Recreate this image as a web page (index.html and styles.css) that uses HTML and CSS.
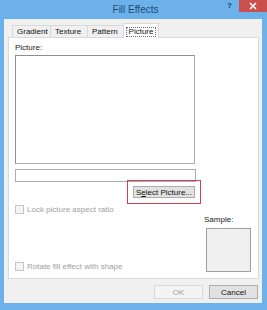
FILE: index.html
```html
<!DOCTYPE html>
<html lang="en">
<head>
    <meta charset="UTF-8">
    <title>Fill Effects</title>
    <link rel="stylesheet" href="styles.css">
</head>
<body>
    <div class="window">
        <div class="titlebar">
            <span></span>
            <span class="title">Fill Effects</span>
            <div class="controls">
                <span class="help">?</span>
                <span class="close">
                    <svg width="8" height="8" viewBox="0 0 8 8"><path d="M1 1L7 7M7 1L1 7" stroke="#fff" stroke-width="1.6"/></svg>
                </span>
            </div>
        </div>

        <div class="body">
            <div class="tabs">
                <div class="tab">Gradient</div>
                <div class="tab">Texture</div>
                <div class="tab">Pattern</div>
                <div class="tab active"><span class="focus">Picture</span></div>
            </div>

            <div class="panel">
                <div class="label">Picture:</div>
                <div class="picture-box"></div>
                <div class="path-box"></div>
                <div class="select-row">
                    <button class="btn select-btn"><span>S<u>e</u>lect Picture...</span></button>
                </div>
                <label class="check disabled">
                    <span class="box"></span>Lock picture aspect ratio
                </label>
                <div class="lower">
                    <label class="check disabled rotate">
                        <span class="box"></span>Rotate fill effect with shape
                    </label>
                    <div class="sample">
                        <div class="label">Sample:</div>
                        <div class="sample-box"></div>
                    </div>
                </div>
            </div>

            <div class="actions">
                <button class="btn disabled">OK</button>
                <button class="btn">Cancel</button>
            </div>
        </div>
    </div>
</body>
</html>
```

FILE: styles.css
```css
body {
    margin: 0;
    font-family: "Liberation Sans", Arial, sans-serif;
    font-size: 8px;
    color: #1a1a1a;
}
.window {
    width: 267px;
    height: 310px;
    box-sizing: border-box;
    background: #6cb1ea;
    padding: 0 5px 7px 4px;
    display: flex;
    flex-direction: column;
}
.titlebar {
    height: 19px;
    display: grid;
    grid-template-columns: 1fr auto 1fr;
    margin-right: -5px;
}
.title {
    font-size: 10px;
    color: #1e4b74;
    line-height: 19px;
}
.controls {
    display: flex;
    justify-content: flex-end;
    align-items: flex-start;
}
.help {
    font-weight: bold;
    font-size: 8px;
    color: #1e3d5c;
    line-height: 11px;
    margin-right: 7px;
}
.close {
    width: 28px;
    height: 12px;
    background: #c9504d;
    display: flex;
    align-items: center;
    justify-content: center;
}
.close svg { display: block; }

.body {
    flex: 1;
    background: #f0f0f0;
    display: flex;
    flex-direction: column;
}
.tabs {
    display: flex;
    align-items: flex-end;
    padding-left: 8px;
    margin-top: 4px;
    height: 15px;
    margin-bottom: -1px;
    position: relative;
    z-index: 1;
}
.tab {
    height: 12px;
    box-sizing: border-box;
    border: 1px solid #d9d9d9;
    border-bottom: none;
    background: #f0f0f0;
    margin-bottom: 1px;
    line-height: 11px;
    padding: 0 4px;
    color: #111;
    margin-right: -1px;
}
.tab:nth-child(1) { width: 39px; }
.tab:nth-child(2) { width: 38px; }
.tab:nth-child(3) { width: 37px; }
.tab.active {
    width: 36px;
    height: 15px;
    margin-bottom: 0;
    background: #fff;
    padding: 3px 2px 0;
    line-height: 8px;
}
.focus {
    display: block;
    border: 1px dotted #6a6a8a;
    text-align: center;
    padding: 0 1px;
}

.panel {
    margin: 0 3px 0 4px;
    height: 242px;
    box-sizing: border-box;
    border: 1px solid #d9d9d9;
    background: #fff;
    padding: 5px 7px 0 6px;
    display: flex;
    flex-direction: column;
}
.label {
    line-height: 10px;
    height: 10px;
}
.picture-box {
    margin-top: 2px;
    width: 180px;
    height: 109px;
    box-sizing: border-box;
    border: 1px solid #acacac;
    border-top-color: #8f8f8f;
    border-left-color: #8f8f8f;
}
.path-box {
    margin-top: 5px;
    width: 181px;
    height: 13px;
    box-sizing: border-box;
    border: 1px solid #abadb3;
}
.select-row {
    margin-top: 4px;
    padding-left: 118px;
}
.btn {
    font-family: inherit;
    font-size: 8px;
    height: 14px;
    padding: 0;
    box-sizing: border-box;
    border: 1px solid #adadad;
    background: #e1e1e1;
    color: #111;
}
.select-btn {
    width: 62px;
    height: 12px;
    line-height: 9px;
    outline: 1px solid #d23f55;
    outline-offset: 5px;
}
.check {
    display: flex;
    align-items: center;
    height: 10px;
    margin-top: 6px;
    gap: 3px;
}
.check.disabled { color: #a0a0a0; }
.check .box {
    width: 9px;
    height: 9px;
    box-sizing: border-box;
    border: 1px solid #c7c7c7;
    background: #f4f4f4;
}
.lower {
    flex: 1;
    display: flex;
    justify-content: space-between;
    align-items: flex-end;
    padding-bottom: 6px;
}
.rotate {
    margin-bottom: 1px;
}
.sample {
    display: flex;
    flex-direction: column;
}
.sample .label { margin-left: -2px; }
.sample-box {
    margin-top: 3px;
    width: 45px;
    height: 44px;
    box-sizing: border-box;
    border: 1px solid #a0a0a0;
    background: #f0f0f0;
}
.actions {
    margin-top: 6px;
    display: flex;
    justify-content: flex-end;
    gap: 6px;
    padding-right: 4px;
}
.actions .btn { width: 49px; }
.actions .btn.disabled {
    background: #f4f4f4;
    border-color: #d9d9d9;
    color: #a0a0a0;
}
```
